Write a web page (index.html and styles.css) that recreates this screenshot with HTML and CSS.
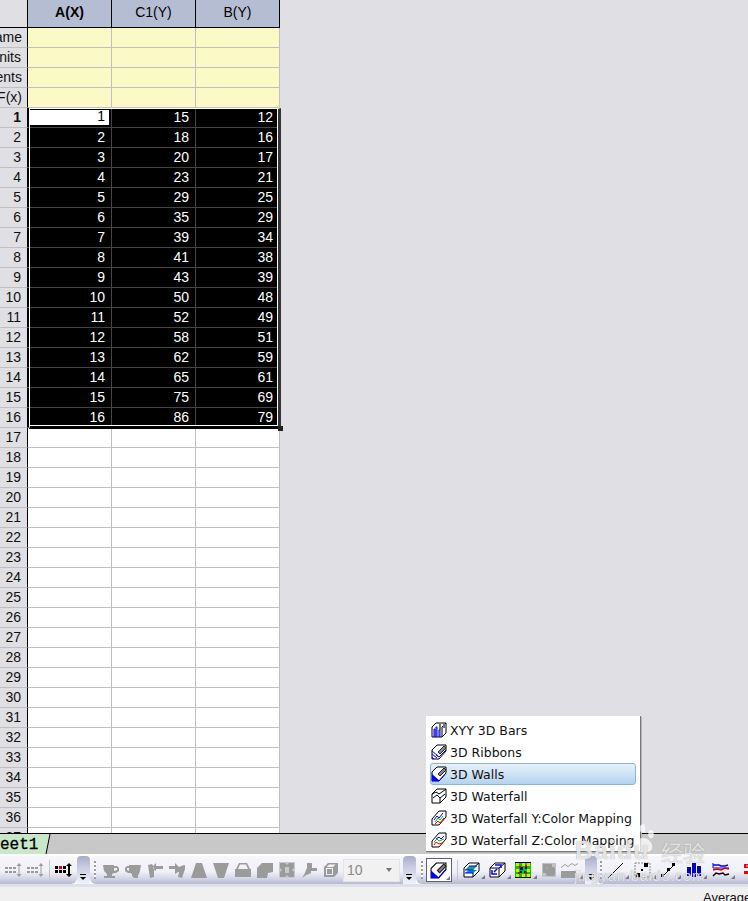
FILE: index.html
```html
<!DOCTYPE html>
<html lang="en">
<head>
<meta charset="utf-8">
<title>Worksheet</title>
<link rel="stylesheet" href="styles.css">
</head>
<body>
<svg class="defs" width="0" height="0">
  <symbol id="i-cup" viewBox="0 0 16 16"><path d="M0 3h11v1h3l2 2v3l-3 2h-2l-2 1v2h3v2H1v-2h3v-2l-3-3zM11 6v3l3-1V6z" fill-rule="evenodd"/></symbol>
  <symbol id="i-cupr" viewBox="0 0 16 16"><path d="M16 3H4v1H2L0 6v3l3 2h2l2 1v2l2 2h4v-3l1-1 1-3zM4 6v3L2 8V6z" fill-rule="evenodd"/></symbol>
  <symbol id="i-arrow-l" viewBox="0 0 16 16"><path d="M1 3l4-1 1 2 3-3v3h7v3H9v2l-2-1 0 7-4 1zM6 6l1 1V5z"/></symbol>
  <symbol id="i-arrow-r" viewBox="0 0 16 16"><path d="M0 4h6V1l4 4 5-2 2 1-4 12-4-1 1-5-1 0-3 2V7H0z"/></symbol>
  <symbol id="i-up" viewBox="0 0 16 16"><path d="M5 1h6l5 15H0z"/></symbol>
  <symbol id="i-down" viewBox="0 0 16 16"><path d="M0 1h16l-5 15H5z"/></symbol>
  <symbol id="i-tray" viewBox="0 0 16 16"><path d="M4 1h8l3 6h1v8H0V7h1zm1 1.500L3 7h10l-2-4.500z" fill-rule="evenodd"/></symbol>
  <symbol id="i-sheet" viewBox="0 0 16 16"><path d="M5 1h11v9l-5 1-1 5H0V6z"/></symbol>
  <symbol id="i-cross" viewBox="0 0 16 16"><path d="M0 0h16v16H0z" fill="#c9c9cd"/><path d="M1 1h5l2 2 2-2h5v5l-2 2 2 2v5h-5l-2-2-2 2H1v-5l2-2-2-2zm5 4v6h4V5z" fill-rule="evenodd"/></symbol>
  <symbol id="i-pin" viewBox="0 0 16 16"><path d="M6 1h5v5h5v3h-6v2l-2 1-3 1-4 3 3-5 1-3 1-2z"/></symbol>
  <symbol id="i-box" viewBox="0 0 16 16"><path d="M5 1h10v10l-4 4H1V5zM6 2.500L3.500 5H10l2.500-2.500zM3 6v7h7V6z" fill-rule="evenodd"/><path d="M4 7h5v5H4z"/></symbol>
  <symbol id="i-xyy" viewBox="0 0 16 16"><path d="M1 5l4-4h10v10l-4 4H1z" fill="#fff" stroke="#000"/><path d="M11 5v10M11 5l4-4" fill="none" stroke="#000"/><path d="M8 2h2v6H8zM12 1h2v5h-2z" fill="#777"/><path d="M3 15V7h1v8M5 15V5h1v10M8 15V8h1v7" stroke="#00f" fill="none"/></symbol>
  <symbol id="i-rib" viewBox="0 0 16 16"><path d="M1 6l5-5h9v6l-7 8H1z" fill="#fff" stroke="#000"/><path d="M1 7l6 5M1 10l5 4M1 13l2 2" stroke="#00f" fill="none"/><path d="M5 11l3 2 7-7" stroke="#00f" fill="none"/><path d="M7 8l6-6 2 2-6 6z" fill="#888" stroke="#333"/></symbol>
  <symbol id="i-wall" viewBox="0 0 16 16"><path d="M1 6l5-5h9v6l-7 8H1z" fill="#fff" stroke="#000"/><path d="M1 8l8 7H1z" fill="#00f"/><path d="M7 8l6-6 2 2-6 6z" fill="#888" stroke="#222"/><path d="M8 15l7-8" stroke="#00f" fill="none"/></symbol>
  <symbol id="i-fall" viewBox="0 0 16 16"><path d="M1 6l5-5h9v8l-6 6H1z" fill="#fff" stroke="#000"/><path d="M1 6l4-2 3 2 3-2 4-3M2 10l4-3 3 3 5-4M9 15v-5" stroke="#000" fill="none"/></symbol>
  <symbol id="i-faly" viewBox="0 0 16 16"><path d="M1 9l7-8h7v6l-7 8H1z" fill="#fff" stroke="#000"/><path d="M3 10l3-4 2 2 4-5" stroke="#00f" fill="none"/><path d="M4 12l3-4 2 2 3-4" stroke="#00c000" fill="none"/><path d="M4 14l3-3 2 2 4-5" stroke="#f00" fill="none"/></symbol>
  <symbol id="i-falz" viewBox="0 0 16 16"><path d="M1 9l7-8h7v6l-7 8H1z" fill="#fff" stroke="#000"/><path d="M5 7l3-2 2 2 3-3" stroke="#00f" fill="none"/><path d="M3 10l3-3 2 2 5-2" stroke="#00c000" fill="none"/><path d="M3 13l2-3 3 2 3-1 2-2" stroke="#f00" fill="none"/></symbol>
</svg>

<main class="canvas">
  <table class="sheet">
    <thead>
      <tr><th class="corner"></th><th class="col col-x">A(X)</th><th class="col">C1(Y)</th><th class="col">B(Y)</th></tr>
    </thead>
    <tbody>
      <tr class="meta"><th>ame</th><td></td><td></td><td></td></tr>
      <tr class="meta"><th>nits</th><td></td><td></td><td></td></tr>
      <tr class="meta"><th>ents</th><td></td><td></td><td></td></tr>
      <tr class="meta"><th>F(x)</th><td></td><td></td><td></td></tr>
      <tr class="sel first"><th>1</th><td><span class="active">1</span></td><td>15</td><td>12</td></tr>
      <tr class="sel"><th>2</th><td>2</td><td>18</td><td>16</td></tr>
      <tr class="sel"><th>3</th><td>3</td><td>20</td><td>17</td></tr>
      <tr class="sel"><th>4</th><td>4</td><td>23</td><td>21</td></tr>
      <tr class="sel"><th>5</th><td>5</td><td>29</td><td>25</td></tr>
      <tr class="sel"><th>6</th><td>6</td><td>35</td><td>29</td></tr>
      <tr class="sel"><th>7</th><td>7</td><td>39</td><td>34</td></tr>
      <tr class="sel"><th>8</th><td>8</td><td>41</td><td>38</td></tr>
      <tr class="sel"><th>9</th><td>9</td><td>43</td><td>39</td></tr>
      <tr class="sel"><th>10</th><td>10</td><td>50</td><td>48</td></tr>
      <tr class="sel"><th>11</th><td>11</td><td>52</td><td>49</td></tr>
      <tr class="sel"><th>12</th><td>12</td><td>58</td><td>51</td></tr>
      <tr class="sel"><th>13</th><td>13</td><td>62</td><td>59</td></tr>
      <tr class="sel"><th>14</th><td>14</td><td>65</td><td>61</td></tr>
      <tr class="sel"><th>15</th><td>15</td><td>75</td><td>69</td></tr>
      <tr class="sel"><th>16</th><td>16</td><td>86</td><td>79</td></tr>
      <tr><th>17</th><td></td><td></td><td></td></tr>
      <tr><th>18</th><td></td><td></td><td></td></tr>
      <tr><th>19</th><td></td><td></td><td></td></tr>
      <tr><th>20</th><td></td><td></td><td></td></tr>
      <tr><th>21</th><td></td><td></td><td></td></tr>
      <tr><th>22</th><td></td><td></td><td></td></tr>
      <tr><th>23</th><td></td><td></td><td></td></tr>
      <tr><th>24</th><td></td><td></td><td></td></tr>
      <tr><th>25</th><td></td><td></td><td></td></tr>
      <tr><th>26</th><td></td><td></td><td></td></tr>
      <tr><th>27</th><td></td><td></td><td></td></tr>
      <tr><th>28</th><td></td><td></td><td></td></tr>
      <tr><th>29</th><td></td><td></td><td></td></tr>
      <tr><th>30</th><td></td><td></td><td></td></tr>
      <tr><th>31</th><td></td><td></td><td></td></tr>
      <tr><th>32</th><td></td><td></td><td></td></tr>
      <tr><th>33</th><td></td><td></td><td></td></tr>
      <tr><th>34</th><td></td><td></td><td></td></tr>
      <tr><th>35</th><td></td><td></td><td></td></tr>
      <tr><th>36</th><td></td><td></td><td></td></tr>
      <tr><th>37</th><td></td><td></td><td></td></tr>
    </tbody>
  </table>
  <div class="sel-frame"><span class="sel-handle"></span></div>
</main>

<nav class="tabs">
  <div class="tab">eet1</div>
  <svg class="tab-edge" width="8" height="20" viewBox="0 0 8 20"><path d="M7 0L3 20H0V0z" fill="#c8e8c8"/><path d="M7 0L3 20" stroke="#000" fill="none"/></svg>
</nav>

<div class="toolbars">
  <div class="band band-a">
    <svg class="ic dis" width="17" height="16" viewBox="0 0 17 16"><path d="M0 5h3v2H0zM4 5h3v2H4zM8 5h3v2H8zM0 9h3v2H0zM4 9h3v2H4zM8 9h3v2H8z"/><path d="M14 1l2.500 3h-2v8h2L14 15l-2.500-3h2V4h-2z"/></svg>
    <svg class="ic dis" width="17" height="16" viewBox="0 0 17 16"><path d="M0 5h3v2H0zM4 5h3v2H4zM8 5h3v2H8zM0 9h3v2H0zM4 9h3v2H4zM8 9h3v2H8z"/><path d="M14 1l2.500 3h-2v8h2L14 15l-2.500-3h2V4h-2z"/></svg>
    <span class="sep"></span>
    <svg class="ic" width="18" height="16" viewBox="0 0 18 16"><path d="M0 4h3v3H0zM8 4h3v3H8zM0 8h3v3H0zM4 8h3v3H4zM8 8h3v3H8z"/><path d="M4 4h3v3H4z" fill="#e00"/><path d="M14 1l3 3h-2v8h2l-3 3-3-3h2V4h-2z"/></svg>
  </div>
  <div class="chevron"><span class="chev-bar"></span><span class="chev-tri"></span></div>
  <div class="band band-b">
    <span class="grip"></span>
    <svg class="ic dis" width="16" height="16"><use href="#i-cup"/></svg>
    <svg class="ic dis" width="16" height="16"><use href="#i-cupr"/></svg>
    <svg class="ic dis" width="16" height="16"><use href="#i-arrow-l"/></svg>
    <svg class="ic dis" width="16" height="16"><use href="#i-arrow-r"/></svg>
    <svg class="ic dis" width="16" height="16"><use href="#i-up"/></svg>
    <svg class="ic dis" width="16" height="16"><use href="#i-down"/></svg>
    <svg class="ic dis" width="16" height="16"><use href="#i-tray"/></svg>
    <svg class="ic dis" width="16" height="16"><use href="#i-sheet"/></svg>
    <svg class="ic dis" width="16" height="16"><use href="#i-cross"/></svg>
    <svg class="ic dis" width="16" height="16"><use href="#i-pin"/></svg>
    <svg class="ic dis" width="16" height="16"><use href="#i-box"/></svg>
    <div class="combo"><span>10</span><i class="combo-tri"></i></div>
  </div>
  <div class="chevron"><span class="chev-bar"></span><span class="chev-tri"></span></div>
  <div class="band band-c">
    <span class="grip"></span>
    <div class="tool-active"><svg width="17" height="17"><use href="#i-wall"/></svg><i class="corner-tri"></i></div>
    <span class="sep"></span>
    <div class="tool"><svg width="17" height="16" viewBox="0 0 17 16"><path d="M1 6l5-5h10v8l-6 6H1z" fill="#fff" stroke="#000"/><path d="M10 15V6l6-5" stroke="#000" fill="none"/><path d="M2 8l4-4h8L10 8z" fill="#0a8"/><path d="M2 11l4-3h8l-4 3z" fill="#08c"/><path d="M2 8h8M2 11h8M6 4h8" stroke="#00f" fill="none"/></svg><i class="corner-tri"></i></div>
    <div class="tool"><svg width="17" height="16" viewBox="0 0 17 16"><path d="M1 6l5-5h10v8l-6 6H1z" fill="#fff" stroke="#000"/><path d="M10 15V6l6-5M1 6h9" stroke="#000" fill="none"/><path d="M6 3h6v3M3 8v4h5M5 10l3-3" stroke="#00f" stroke-width="1.500" fill="none"/></svg><i class="corner-tri"></i></div>
    <div class="tool"><svg width="17" height="16" viewBox="0 0 17 16"><path d="M0 0h16v16H0z" fill="#0c0"/><path d="M5 5h3v3H5zM9 9h2v2H9zM5 9h2v2H5zM10 5h2v2h-2z" fill="#00c"/><path d="M1 1h3v3H1zM7 1h3v3H7zM12 1h3v3h-3zM1 7h3v3H1zM12 7h3v3h-3zM1 12h3v3H1zM7 12h3v3H7zM12 12h3v3h-3z" fill="#e8e000"/><path d="M4 4h2v2H4zM10 3h2v2h-2zM3 10h2v2H3zM10 10h2v2h-2z" fill="#e00"/><path d="M0 15h16v1H0zM0 0h16v1H0z" fill="#000"/></svg><i class="corner-tri"></i></div>
    <svg class="ic dis" width="16" height="16" viewBox="0 0 16 16"><path d="M1 1h14v14H1z" fill="#c2c2c6"/><path d="M2 2h9v3H5v6H2z"/><path d="M7 5h5a2 2 0 012 2v5a2 2 0 01-2 2H7a2 2 0 01-2-2V7a2 2 0 012-2z"/></svg>
    <div class="tool"><svg class="dis" width="17" height="16" viewBox="0 0 17 16"><path d="M0 5l4-3 3 2 4-3 3 2 3-2v1l-3 2-3-2-4 3-3-2-4 3z"/><path d="M0 9h15v7H0z"/></svg><i class="corner-tri"></i></div>
  </div>
  <div class="chevron chevron-thin"><span class="chev-bar"></span><span class="chev-tri"></span></div>
  <div class="band band-d">
    <span class="grip"></span>
    <div class="tool"><svg width="16" height="16" viewBox="0 0 16 16"><path d="M0 16L15 1" stroke="#000" fill="none"/></svg><i class="corner-tri"></i></div>
    <div class="tool"><svg width="17" height="16" viewBox="0 0 17 16"><path d="M1 1h15v14H1z" fill="none" stroke="#888" stroke-dasharray="2 1"/><path d="M10 1h4v4h-4zM2 11h4v4H2zM7 7h2v2H7z"/></svg><i class="corner-tri"></i></div>
    <div class="tool"><svg width="15" height="16" viewBox="0 0 15 16"><path d="M1 15L14 2" stroke="#000" fill="none"/><path d="M0 12h3v3H0zM6 6h3v3H6zM11 1h3v3h-3z"/></svg><i class="corner-tri"></i></div>
    <div class="tool"><svg width="16" height="16" viewBox="0 0 16 16"><path d="M1 5h4v9H1zM6 1h4v14H6zM11 4h4v10h-4z" fill="#0000c8"/></svg><i class="corner-tri"></i></div>
    <div class="tool"><svg width="18" height="16" viewBox="0 0 18 16"><path d="M1 1v5h16" stroke="#00f" fill="none"/><path d="M1 3h6l2 1h4l3-1" stroke="#00f" stroke-width="1.500" fill="none"/><path d="M1 8l4-1 4 1 4-2 4 1" stroke="#e00" stroke-width="1.500" fill="none"/><path d="M1 14l3-3 3 1 4-1 2 2 4-1" stroke="#000" stroke-width="1.500" fill="none"/></svg><i class="corner-tri"></i></div>
    <svg class="ic last" width="16" height="16" viewBox="0 0 16 16"><path d="M2 2h12v4H2zM7 6h2v3h5v3H9v3H7v-3H2V9h5z" fill="#e00"/><path d="M4 3.500h8v1H4z" fill="#fff"/></svg>
  </div>
</div>

<footer class="status">Average</footer>

<div class="menu">
  <div class="menu-item"><svg width="16" height="16"><use href="#i-xyy"/></svg><span>XYY 3D Bars</span></div>
  <div class="menu-item"><svg width="16" height="16"><use href="#i-rib"/></svg><span>3D Ribbons</span></div>
  <div class="menu-item hot"><svg width="16" height="16"><use href="#i-wall"/></svg><span>3D Walls</span></div>
  <div class="menu-item"><svg width="16" height="16"><use href="#i-fall"/></svg><span>3D Waterfall</span></div>
  <div class="menu-item"><svg width="16" height="16"><use href="#i-faly"/></svg><span>3D Waterfall Y:Color Mapping</span></div>
  <div class="menu-item"><svg width="16" height="16"><use href="#i-falz"/></svg><span>3D Waterfall Z:Color Mapping</span></div>
</div>

<div class="mark">
  <svg class="mark-paw" width="28" height="36" viewBox="0 0 40 42"><ellipse cx="7" cy="12" rx="4" ry="6"/><ellipse cx="18" cy="6" rx="4" ry="6"/><ellipse cx="30" cy="14" rx="4" ry="6"/><path d="M6 28c4-10 18-12 24-2 4 7 2 14-8 14-6 0-15 1-17-3-1-3 0-6 1-9z"/></svg>
  <div class="mark-logo">Baidu</div>
  <div class="mark-cn">经验</div>
  <div class="mark-url">jingyan.baidu.com</div>
</div>
</body>
</html>
```

FILE: styles.css
```css
* { box-sizing: border-box; }
html, body { margin: 0; padding: 0; }
body {
  position: relative;
  width: 748px;
  height: 901px;
  overflow: hidden;
  display: flex;
  flex-direction: column;
  background: #e0dfe3;
  font-family: "Liberation Sans", Arial, sans-serif;
}
.defs { position: absolute; }

.canvas {
  position: relative;
  height: 833px;
  flex: none;
  overflow: hidden;
  background: #e0dfe3;
}
.sheet {
  border-collapse: separate;
  border-spacing: 0;
  table-layout: fixed;
  width: 280px;
  font-size: 14px;
  color: #000;
  background: #fff;
}
.sheet th, .sheet td {
  height: 20px;
  padding: 0 6px 0 0;
  text-align: right;
  font-weight: normal;
  border-right: 1px solid #c0c0c0;
  border-bottom: 1px solid #c0c0c0;
  line-height: 17px;
  white-space: nowrap;
  overflow: hidden;
}
.sheet tbody th {
  width: 28px;
  background: #e0dfe3;
  border-right: 1px solid #000;
  direction: rtl;
  color: #111;
}
.sheet thead th {
  height: 28px;
  background: #b5bdd3;
  text-align: center;
  padding: 0 0 2px;
  border-right: 1px solid #000;
  border-bottom: 1px solid #000;
}
.sheet thead .corner { width: 28px; background: #e0dfe3; border-bottom: 1px solid #000; }
.sheet thead .col { width: 84px; }
.sheet thead .col-x { font-weight: bold; }

.meta td { background: #fbf9c6; }
.sel th { background: #b5bdd3; }
.first th { font-weight: bold; }
.sel td {
  background: #000;
  color: #fff;
  border-right-color: #444;
  border-bottom-color: #444;
}
.active {
  display: block;
  margin: 2px -4px 2px 2px;
  padding-right: 4px;
  height: 15px;
  line-height: 13px;
  background: #fff;
  color: #000;
}

.sel-frame {
  position: absolute;
  left: 29px;
  top: 108px;
  width: 252px;
  height: 321px;
  border-style: solid;
  border-color: #fff #333 #000 #fff;
  border-width: 1px 3px 3px 1px;
}
.sel-frame::after {
  content: "";
  position: absolute;
  inset: 0 0 0 0;
  border-right: 1px solid #fff;
  border-bottom: 1px solid #fff;
}
.sel-handle {
  position: absolute;
  right: -5px;
  bottom: -5px;
  width: 5px;
  height: 5px;
  background: #222;
}

.tabs {
  flex: none;
  height: 21px;
  display: flex;
  background: #c8c8c8;
  border-top: 1px solid #000;
}
.tab {
  width: 43px;
  height: 20px;
  background: #c8e8c8;
  font: 16px/22px "Liberation Mono", "Courier New", monospace;
  -webkit-text-stroke: 0.3px #000;
  color: #000;
  text-align: left;
  overflow: hidden;
}
.tab-edge { flex: none; }

.toolbars {
  flex: none;
  height: 33px;
  display: flex;
  background: #fff;
  padding-top: 2px;
  border-bottom: 3px solid #dfe0ea;
}
.band {
  height: 28px;
  display: flex;
  align-items: center;
  background: linear-gradient(#f6f6fb 0%, #f0f0f7 55%, #d8d9e7 78%, #b6b8d0 100%);
}
.band-a { width: 77px; padding-left: 5px; gap: 5px; border-radius: 0 6px 6px 0; }
.band-b { width: 313px; padding-left: 4px; gap: 6px; border-radius: 6px 0 0 6px; }
.band-b .grip { margin-right: 1px; }
.band-b .combo { margin-left: -2px; }
.band-c { width: 169px; padding-left: 5px; gap: 4px; border-radius: 6px 0 0 6px; }
.band-c .grip { margin-right: -1px; }
.band-c .sep { margin: 0 1px; }
.band-d { flex: 1; padding-left: 3px; gap: 5px; overflow: hidden; border-radius: 6px 0 0 6px; }
.band-d .grip { margin-right: 1px; }
.last { margin-left: 2px; }
.ic { flex: none; fill: #000; }
.dis { fill: #9b9b9b; }
.sep { width: 1px; height: 20px; background: #c4c5d4; flex: none; }
.grip {
  flex: none;
  width: 2px;
  height: 18px;
  background: repeating-linear-gradient(#9a9aa8 0 2px, #fff 2px 4px);
}
.chevron {
  flex: none;
  width: 13px;
  height: 28px;
  position: relative;
  background: linear-gradient(#a9adc8, #c9cbe0 40%, #e4e6f2 80%, #f2f3f9);
  border-radius: 4px 4px 0 0;
}
.chevron-thin { width: 12px; }
.chev-bar { position: absolute; left: 3px; top: 18px; width: 6px; height: 1px; background: #000; }
.chev-tri {
  position: absolute;
  left: 3px;
  top: 21px;
  border: 3px solid transparent;
  border-top: 3px solid #000;
  border-bottom: 0;
}
.combo {
  flex: none;
  width: 57px;
  height: 23px;
  display: flex;
  align-items: center;
  justify-content: space-between;
  padding: 0 7px 0 3px;
  background: #f1f1f1;
  border: 1px solid #e4e4e4;
  color: #8a8a8a;
  font-size: 14px;
}
.combo-tri { border: 3.500px solid transparent; border-top: 4px solid #777; border-bottom: 0; }

.tool, .tool-active { position: relative; display: flex; align-items: center; flex: none; }
.tool { padding-right: 5px; height: 22px; }
.tool-active {
  width: 26px;
  height: 24px;
  padding-left: 3px;
  background: #fff;
  border: 1px solid #5d6172;
}
.corner-tri {
  position: absolute;
  right: 1px;
  bottom: 1px;
  border-style: solid;
  border-width: 0 0 4px 4px;
  border-color: transparent transparent #77798a transparent;
}
.tool .corner-tri { right: 0; bottom: 2px; }

.status {
  flex: 1;
  min-height: 0;
  overflow: hidden;
  background: #f0f0f0;
  padding: 4px 0 0 703px;
  font-size: 13px;
  line-height: 14px;
  color: #111;
  white-space: nowrap;
}

.menu {
  position: absolute;
  left: 426px;
  top: 716px;
  width: 215px;
  height: 136px;
  background: #fff;
  padding: 3px 4px 0 4px;
  border-right: 1px solid #777;
  border-bottom: 1px solid #777;
  box-shadow: 1px 1px 0 #b5b5b5;
  font-family: "DejaVu Sans", sans-serif;
  font-size: 12.5px;
  color: #111;
}
.menu-item {
  height: 22px;
  display: flex;
  align-items: center;
  gap: 3px;
  padding-left: 1px;
  border-radius: 3px;
  white-space: nowrap;
}
.menu-item svg { flex: none; }
.hot {
  background: linear-gradient(#e6f1fb, #cfe3f5 50%, #b4d3ee);
  border: 1px solid #8db4d8;
  padding-left: 0;
}

.mark {
  position: absolute;
  left: 570px;
  top: 815px;
  width: 178px;
  height: 86px;
  color: rgba(255, 255, 255, 0.75);
  text-shadow: 0 0 1px rgba(110, 110, 110, 0.7);
  pointer-events: none;
}
.mark-paw { position: absolute; left: 60px; top: 6px; fill: rgba(255, 255, 255, 0.7); }
.mark-logo {
  position: absolute;
  left: 5px;
  top: 20px;
  font-size: 25px;
  letter-spacing: 1px;
  line-height: 30px;
  font-weight: bold;
  white-space: nowrap;
}
.mark-cn {
  position: absolute;
  left: 91px;
  top: 19px;
  font: 22px/34px "Noto Sans CJK SC", sans-serif;
  white-space: nowrap;
}
.mark-url {
  position: absolute;
  left: 4px;
  top: 52px;
  font-size: 15px;
  line-height: 18px;
  letter-spacing: 0.6px;
  white-space: nowrap;
}
```
